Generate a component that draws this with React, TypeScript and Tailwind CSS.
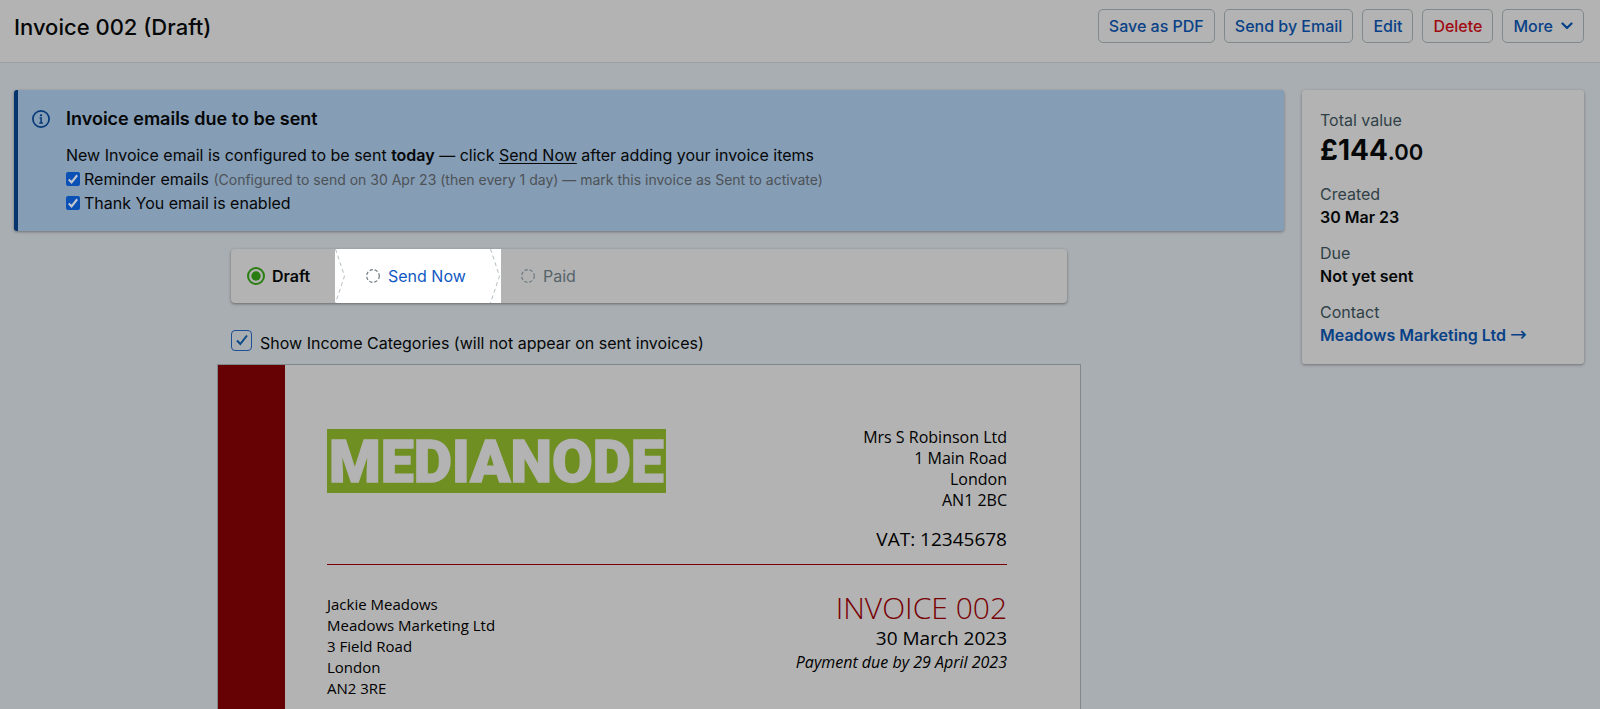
import React, { useState } from 'react';
import clsx from 'clsx';

const SENDER = ['Mrs S Robinson Ltd', '1 Main Road', 'London', 'AN1 2BC'];
const RECIPIENT = ['Jackie Meadows', 'Meadows Marketing Ltd', '3 Field Road', 'London', 'AN2 3RE'];

const actions = [
  { label: 'Save as PDF', danger: false },
  { label: 'Send by Email', danger: false },
  { label: 'Edit', danger: false },
  { label: 'Delete', danger: true },
];

export default function App() {
  const [showCategories, setShowCategories] = useState(true);

  return (
    <div className="min-h-screen flex flex-col bg-[#a9aeb2] font-['Inter','Liberation_Sans',sans-serif] text-base text-[#050708]">
      {/* ── Page header ── */}
      <header className="flex items-start justify-between bg-[#b3b3b3] border-b border-[#9d9fa5] pl-3.5 pr-4 pt-[9px] pb-[16px]">
        <h1 className="text-[22px] leading-[37px] font-medium">Invoice 002 (Draft)</h1>
        <div className="flex gap-[9px]">
          {actions.map((action) => (
            <button
              key={action.label}
              type="button"
              className={clsx(
                'h-[34px] rounded-[5px] border border-[#7f888b] px-[10px] font-medium',
                action.danger ? 'text-[#a00b12]' : 'text-[#084187]'
              )}
            >
              {action.label}
            </button>
          ))}
          <button type="button" className="flex h-[34px] items-center gap-2 rounded-[5px] border border-[#7f888b] px-[10px] font-medium text-[#084187]">
            More
            <svg width="12" height="8" viewBox="0 0 12 8" fill="none" stroke="currentColor" strokeWidth="2.2" strokeLinecap="round" strokeLinejoin="round">
              <path d="M1.5 1.5 6 6l4.500-4.500" />
            </svg>
          </button>
        </div>
      </header>

      <div className="flex flex-1 gap-[18px] pl-3.5 pr-4 pt-[27px]">
        <main className="flex min-w-0 flex-1 flex-col">
          <EmailBanner />

          <div className="mx-auto mt-[18px] mb-[7px] w-full max-w-[836px]">
            <Steps />
            <label className="mt-[26px] flex h-7 items-start gap-2">
              <span className="grid h-[22px] w-[21px] place-items-center">
                <input
                  type="checkbox"
                  checked={showCategories}
                  onChange={(e) => setShowCategories(e.target.checked)}
                  className="col-start-1 row-start-1 h-[21px] w-[21px] appearance-none rounded-[4px] border border-[#1d4f93]"
                />
                {showCategories && <Tick className="col-start-1 row-start-1 h-3 w-3 text-[#0b4a86]" width={2} />}
              </span>
              <span className="leading-7">Show Income Categories (will not appear on sent invoices)</span>
            </label>
          </div>

          <InvoicePaper />
        </main>

        <Summary />
      </div>
    </div>
  );
}

function EmailBanner() {
  return (
    <section className="flex gap-4 rounded-[3px] border-l-4 border-[#06356e] bg-[#859db5] pl-[14px] pr-4 pt-[17px] pb-4 shadow-[0_1px_3px_rgba(0,0,0,0.35)]">
      <svg width="18" height="18" viewBox="0 0 18 18" fill="none" className="mt-[3px] shrink-0 text-[#063a78]">
        <circle cx="9" cy="9" r="8.100" stroke="currentColor" strokeWidth="1.700" />
        <circle cx="9" cy="5.300" r="1.150" fill="currentColor" />
        <path d="M7.600 8h1.500v4.700M7.300 12.900h3.600" stroke="currentColor" strokeWidth="1.500" />
      </svg>
      <div className="leading-6">
        <h2 className="mb-3 text-lg leading-6 font-semibold">Invoice emails due to be sent</h2>
        <p>
          New Invoice email is configured to be sent <strong className="font-semibold">today</strong> — click{' '}
          <a href="#send" className="underline underline-offset-2">Send Now</a> after adding your invoice items
        </p>
        <BannerOption>
          Reminder emails{' '}
          <span className="text-sm text-[#4d5257]">
            (Configured to send on 30 Apr 23 (then every 1 day) — mark this invoice as Sent to activate)
          </span>
        </BannerOption>
        <BannerOption>Thank You email is enabled</BannerOption>
      </div>
    </section>
  );
}

function BannerOption({ children }: { children: React.ReactNode }) {
  return (
    <label className="flex items-center gap-1">
      <span className="grid h-[18px] w-[14px] place-items-center">
        <input type="checkbox" defaultChecked className="peer col-start-1 row-start-1 h-[14px] w-[14px] appearance-none rounded-[2px] bg-[#0b50b5]" />
        <Tick className="invisible col-start-1 row-start-1 h-[10px] w-[10px] text-[#c3c8d0] peer-checked:visible" width={2.5} />
      </span>
      <span>{children}</span>
    </label>
  );
}

function Tick({ className, width }: { className?: string; width: number }) {
  return (
    <svg viewBox="0 0 12 12" fill="none" stroke="currentColor" strokeWidth={width} className={clsx('pointer-events-none', className)}>
      <path d="M1 6.500 4.300 10 11 1.500" />
    </svg>
  );
}

function Steps() {
  return (
    <ol className="flex h-[54px] rounded-[4px] bg-[#b3b3b3] shadow-[0_1px_3px_rgba(0,0,0,0.4)]">
      <li className="flex w-[104px] items-center gap-[7px] pl-4 font-semibold">
        <svg width="18" height="18" viewBox="0 0 18 18" fill="none">
          <circle cx="9" cy="9" r="8" stroke="#2a7d11" strokeWidth="2" />
          <circle cx="9" cy="9" r="4.700" fill="#2a7d11" />
        </svg>
        Draft
      </li>
      <li className="flex w-[166px] items-center bg-white text-[#1159c4]">
        <StepEdge />
        <a href="#send" className="flex flex-1 items-center gap-2 pl-5 whitespace-nowrap">
          <DashedCircle />
          Send Now
        </a>
        <StepEdge />
      </li>
      <li className="flex items-center gap-2 pl-5 text-[#56646b]">
        <DashedCircle />
        Paid
      </li>
    </ol>
  );
}

function StepEdge() {
  return (
    <svg width="11" height="54" viewBox="0 0 11 54" fill="none" stroke="#b4bdc0" strokeDasharray="4 3">
      <path d="M0.500 0 9.500 27 0.500 54" />
    </svg>
  );
}

function DashedCircle() {
  return (
    <svg width="14" height="14" viewBox="0 0 14 14" fill="none" stroke="#6c7a80" strokeWidth="1.200" strokeDasharray="3.200 1.900">
      <circle cx="7" cy="7" r="6.300" />
    </svg>
  );
}

function InvoicePaper() {
  return (
    <article className="mx-auto flex w-full max-w-[864px] flex-1 border border-b-0 border-[#80888c] bg-[#b3b3b3] font-['Open_Sans','Noto_Sans',sans-serif] text-base leading-[21px] text-black">
      <div className="w-[67px] shrink-0 bg-[#660204]" />
      <div className="flex-1 pl-[42px] pr-[73px] pt-[62px]">
        <div className="flex h-[138px] items-start justify-between border-b border-[#7b0003]">
          <svg width="339" height="64" viewBox="0 0 339 64" role="img" aria-label="MEDIANODE" className="mt-0.5 overflow-visible">
            <rect width="339" height="64" fill="#6f8f22" />
            <text x="169.500" y="53" textAnchor="middle" fontSize="59" fontWeight="900" fontFamily="Roboto, 'Liberation Sans', sans-serif" fill="#b3b3b3" stroke="#b3b3b3" strokeWidth="1.500">
              MEDIANODE
            </text>
          </svg>
          <address className="text-right not-italic">
            {SENDER.map((line) => (
              <div key={line}>{line}</div>
            ))}
            <div className="mt-[18px] text-[19px] leading-[21px]">VAT: 12345678</div>
          </address>
        </div>
        <div className="flex items-start justify-between pt-[26px] pb-2">
          <address className="pt-[3px] text-[15px] leading-[21px] not-italic">
            {RECIPIENT.map((line) => (
              <div key={line}>{line}</div>
            ))}
          </address>
          <div className="text-right">
            <h2 className="text-[30px] leading-[34px] font-light text-[#780003]">INVOICE 002</h2>
            <p className="text-[19px] leading-[27px]">30 March 2023</p>
            <p className="italic">Payment due by 29 April 2023</p>
          </div>
        </div>
      </div>
    </article>
  );
}

function Summary() {
  return (
    <aside className="w-[282px] shrink-0 self-start rounded-[3px] bg-[#b3b3b3] px-[18px] pt-[19px] pb-[17px] leading-[23px] shadow-[0_1px_3px_rgba(0,0,0,0.35)]">
      <dl className="space-y-[13px]">
        <div>
          <dt className="text-[#2f4147]">Total value</dt>
          <dd className="text-[28px] leading-9 font-bold">
            £144<span className="text-[22px] font-semibold">.00</span>
          </dd>
        </div>
        <Fact label="Created">30 Mar 23</Fact>
        <Fact label="Due">Not yet sent</Fact>
        <Fact label="Contact">
          <a href="#contact" className="text-[#084187]">
            Meadows Marketing Ltd <span className="font-['DejaVu_Sans',sans-serif] text-xl leading-none font-normal">→</span>
          </a>
        </Fact>
      </dl>
    </aside>
  );
}

function Fact({ label, children }: { label: string; children: React.ReactNode }) {
  return (
    <div>
      <dt className="text-[#2f4147]">{label}</dt>
      <dd className="font-semibold">{children}</dd>
    </div>
  );
}
